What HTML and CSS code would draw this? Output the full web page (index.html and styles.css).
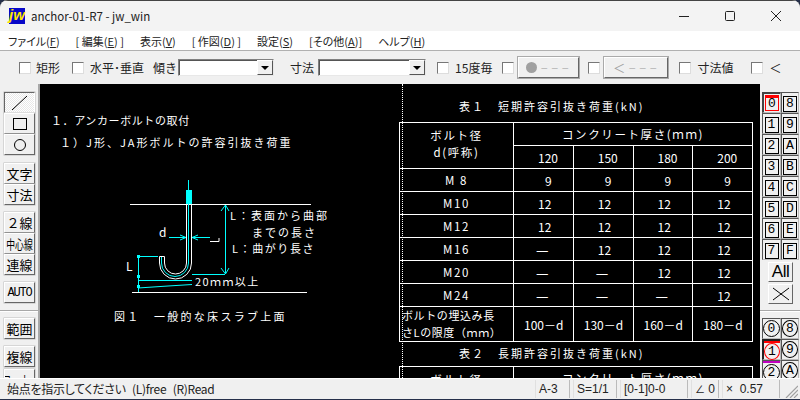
FILE: index.html
```html
<!DOCTYPE html>
<html lang="ja">
<head>
<meta charset="UTF-8" />
<title>anchor-01-R7 - jw_win</title>
<link rel="stylesheet" href="styles.css">
</head>
<body>

<div class="window">

  <div class="titlebar">
    <span class="logo">jw</span>
    <span class="title">anchor-01-R7 - jw_win</span>
    <div class="winbtns">
      <svg width="12" height="12" viewBox="0 0 12 12"><path d="M1 6.5H11" stroke="#222" fill="none"/></svg>
      <svg width="12" height="12" viewBox="0 0 12 12"><rect x="1.5" y="1.5" width="9" height="9" rx="1" stroke="#222" fill="none"/></svg>
      <svg width="12" height="12" viewBox="0 0 12 12"><path d="M1 1L11 11M11 1L1 11" stroke="#222" fill="none"/></svg>
    </div>
  </div>

  <div class="menubar">
    <span>ファイル(<u>F</u>)</span>
    <span>[ 編集(<u>E</u>) ]</span>
    <span>表示(<u>V</u>)</span>
    <span>[ 作図(<u>D</u>) ]</span>
    <span>設定(<u>S</u>)</span>
    <span>[その他(<u>A</u>)]</span>
    <span>ヘルプ(<u>H</u>)</span>
  </div>

  <div class="toolbar">
    <span class="chk m-first"></span><span class="lbl m-a">矩形</span>
    <span class="chk m-b"></span><span class="lbl">水平･垂直</span>
    <span class="lbl m-c">傾き</span>
    <span class="combo combo-a"><span class="arrow"></span></span>
    <span class="lbl m-d">寸法</span>
    <span class="combo combo-b"><span class="arrow"></span></span>
    <span class="chk m-e"></span><span class="lbl">15度毎</span>
    <span class="chk m-f"></span>
    <span class="tbtn tbtn-a"><i class="dot"></i><span class="dashes">－－－</span></span>
    <span class="chk m-g"></span>
    <span class="tbtn tbtn-b">＜<span class="dashes">－－－</span></span>
    <span class="chk m-h"></span><span class="lbl">寸法値</span>
    <span class="chk m-i"></span><span class="lbl">＜</span>
  </div>

  <div class="main">

    <div class="leftbar">
      <div class="tool on">
        <svg width="20" height="16" viewBox="0 0 20 16"><path d="M2 15L17 1" stroke="#000" fill="none"/></svg>
      </div>
      <div class="tool">
        <svg width="16" height="14" viewBox="0 0 16 14"><rect x="1.5" y="1.5" width="13" height="11" stroke="#000" fill="none"/></svg>
      </div>
      <div class="tool">
        <svg width="16" height="14" viewBox="0 0 16 14"><circle cx="8" cy="7" r="5.5" stroke="#000" fill="none"/></svg>
      </div>
      <div class="tool gap8">文字</div>
      <div class="tool">寸法</div>
      <div class="tool gap">２線</div>
      <div class="tool"><span class="squeeze">中心線</span></div>
      <div class="tool">連線</div>
      <div class="tool gap auto">AUTO</div>
      <div class="sep"></div>
      <div class="tool">範囲</div>
      <div class="tool gap">複線</div>
      <div class="tool gap1"><span class="squeeze">コーナー</span></div>
    </div>

    <div class="canvas">
      <div class="divider"></div>

      <div class="note n1">１．アンカーボルトの取付</div>
      <div class="note n2">１）J形、JA形ボルトの許容引抜き荷重</div>

      <svg class="drawing" width="320" height="130" viewBox="120 175 320 130">
        <g fill="none" stroke="#fff">
          <path d="M130 204.5H311M132 292.5H307"/>
          <path d="M186.5 204V263A11 11 0 0 1 164.5 263V256.5H159.5V263A16 16 0 0 0 191.5 263V204"/>
          <path d="M210 241.5H219V238"/>
        </g>
        <g fill="none" stroke="#0ff">
          <path d="M188.5 180V263A13.5 13.5 0 0 1 161.5 263V257"/>
          <path d="M225.5 205V274M192 274.5H225"/>
          <path d="M221 211L225.5 205L229 211M221 268L225.5 274L229 268"/>
          <path d="M169 237.5H186M192 237.5H210"/>
          <path d="M180 235L186 237.5L180 240M198 235L192 237.5L198 240"/>
          <path d="M138.5 256V292M138 256.5H158M138 280.5H192M138 288L168 286L192 284.5"/>
        </g>
        <rect x="186" y="190" width="6" height="14" fill="#0ff"/>
        <g fill="#0ff">
          <rect x="137" y="255" width="3" height="3"/>
          <rect x="137" y="275" width="3" height="3"/>
          <rect x="137" y="285" width="3" height="3"/>
        </g>
      </svg>

      <div class="note l1">L：表面から曲部</div>
      <div class="note l2">までの長さ</div>
      <div class="note l3">L：曲がり長さ</div>
      <div class="note l4">d</div>
      <div class="note l5">L</div>
      <div class="note l6">20ｍｍ以上</div>
      <div class="note fig">図１　一般的な床スラブ上面</div>

      <div class="sheet">
        <div class="caption">表１　短期許容引抜き荷重(kN)</div>
        <table class="bolts">
          <tr><th rowspan="2" class="head">ボルト径<br>d(呼称)</th><th colspan="4">コンクリート厚さ(ｍｍ)</th></tr>
          <tr><td>120</td><td>150</td><td>180</td><td>200</td></tr>
          <tr><th>M 8</th><td class="one">9</td><td class="one">9</td><td class="one">9</td><td class="one">9</td></tr>
          <tr><th>M10</th><td>12</td><td>12</td><td>12</td><td>12</td></tr>
          <tr><th>M12</th><td>12</td><td>12</td><td>12</td><td>12</td></tr>
          <tr><th>M16</th><td class="dash">—</td><td>12</td><td>12</td><td>12</td></tr>
          <tr><th>M20</th><td class="dash">—</td><td class="dash">—</td><td>12</td><td>12</td></tr>
          <tr><th>M24</th><td class="dash">—</td><td class="dash">—</td><td class="dash">—</td><td>12</td></tr>
          <tr class="tall"><th class="left">ボルトの埋込み長<br>さLの限度（ｍｍ）</th><td class="wide">100－d</td><td class="wide">130－d</td><td class="wide">160－d</td><td class="wide">180－d</td></tr>
        </table>
        <div class="caption second">表２　長期許容引抜き荷重(kN)</div>
        <table class="bolts">
          <tr><th rowspan="2" class="head">ボルト径<br>d(呼称)</th><th colspan="4">コンクリート厚さ(ｍｍ)</th></tr>
          <tr><td>120</td><td>150</td><td>180</td><td>200</td></tr>
        </table>
      </div>
    </div>

    <div class="rightbar">
      <div class="layers">
        <div class="lay cur"><b>0</b></div><div class="lay"><b>8</b></div>
        <div class="lay"><b>1</b></div><div class="lay"><b>9</b></div>
        <div class="lay"><b>2</b></div><div class="lay"><b>A</b></div>
        <div class="lay"><b>3</b></div><div class="lay"><b>B</b></div>
        <div class="lay"><b>4</b></div><div class="lay"><b>C</b></div>
        <div class="lay"><b>5</b></div><div class="lay"><b>D</b></div>
        <div class="lay"><b>6</b></div><div class="lay"><b>E</b></div>
        <div class="lay"><b>7</b></div><div class="lay"><b>F</b></div>
      </div>
      <div class="wide-btn">All</div>
      <div class="wide-btn">
        <svg width="18" height="14" viewBox="0 0 18 14"><path d="M1 1L17 13M17 1L1 13" stroke="#000" fill="none"/></svg>
      </div>
      <div class="sep"></div>
      <div class="groups">
        <div class="grp"><b>0</b></div><div class="grp"><b>8</b></div>
        <div class="grp cur"><b>1</b></div><div class="grp"><b>9</b></div>
        <div class="grp mag"><b>2</b></div><div class="grp"><b>A</b></div>
      </div>
    </div>
  </div>

  <div class="statusbar">
    <span class="msg">始点を指示してください (L)free (R)Read</span>
    <span class="cell c1">A-3</span>
    <span class="cell c2">S=1/1</span>
    <span class="cell c3">[0-1]0-0</span>
    <span class="cell c4">∠ 0</span>
    <span class="cell c5">×  0.57</span>
    <svg class="grip" width="14" height="14" viewBox="0 0 14 14"><path d="M2 14L14 2M6 14L14 6M10 14L14 10" stroke="#a0a0a0" stroke-width="1.2" fill="none"/></svg>
  </div>
</div>

</body>
</html>
```

FILE: styles.css
```css
html, body {
  margin: 0;
  padding: 0;
  background: #26304a;
}
body {
  width: 800px;
  height: 400px;
  overflow: hidden;
  font-family: "Noto Sans CJK JP", "Liberation Sans", sans-serif;
  font-size: 12px;
  color: #000;
}
.window {
  width: 800px;
  height: 399px;
  background: #f0f0f0;
  border-top-right-radius: 8px;
  border-top-left-radius: 8px;
  overflow: hidden;
  display: flex;
  flex-direction: column;
  box-shadow: inset 0 1px 0 #555;
}

/* title */
.titlebar {
  height: 31px;
  flex: none;
  display: flex;
  align-items: center;
  background: #f3f3f3;
  padding-left: 9px;
  border-top: 1px solid #444;
  box-sizing: border-box;
}
.logo {
  width: 16px;
  height: 16px;
  background: #0808c8;
  color: #ffe600;
  font: italic bold 15px/14px "Liberation Sans", sans-serif;
  text-align: center;
}
.title {
  margin-left: 6px;
  font-size: 11.5px;
  color: #222;
}
.winbtns {
  margin-left: auto;
  display: flex;
  gap: 34px;
  padding-right: 18px;
}

/* menu */
.menubar {
  height: 19px;
  flex: none;
  background: #fff;
  display: flex;
  align-items: center;
  gap: 16px;
  padding-left: 8px;
  font-size: 11px;
  font-feature-settings: "palt";
  color: #222;
}
.menubar span {
  white-space: nowrap;
}

/* toolbar */
.toolbar {
  height: 34px;
  flex: none;
  box-sizing: border-box;
  border-top: 1px solid #b0b0b0;
  display: flex;
  align-items: center;
  font-size: 12px;
  color: #222;
}
.chk {
  width: 10px;
  height: 10px;
  flex: none;
  background: #fff;
  border: 1px solid;
  border-color: #777 #ddd #ddd #777;
}
.lbl {
  margin-left: 6px;
  white-space: nowrap;
}
.m-first { margin-left: 19px; }
.lbl.m-a { margin-left: 5px; }
.m-b { margin-left: 12px; }
.lbl.m-c { margin-left: 9px; }
.lbl.m-d { margin-left: 16px; }
.m-e { margin-left: 11px; }
.m-f { margin-left: 10px; }
.m-g { margin-left: 9px; }
.m-h { margin-left: 11px; }
.m-i { margin-left: 18px; }
.combo {
  height: 15px;
  background: #fff;
  border: 1px solid;
  border-color: #808080 #e8e8e8 #e8e8e8 #808080;
  display: flex;
  justify-content: flex-end;
  box-shadow: inset 1px 1px 0 #555;
}
.combo-a { width: 94px; margin-left: 1px; }
.combo-b { width: 106px; margin-left: 4px; }
.arrow {
  width: 16px;
  background: #f0f0f0;
  border-left: 1px solid #fff;
  border-top: 1px solid #fff;
  border-right: 1px solid #555;
  border-bottom: 1px solid #555;
  box-sizing: border-box;
  position: relative;
}
.arrow::after {
  content: "";
  position: absolute;
  left: 3px;
  top: 5px;
  border: 4px solid transparent;
  border-top: 4px solid #000;
}
.tbtn {
  height: 19px;
  margin-left: 4px;
  display: flex;
  align-items: center;
  justify-content: center;
  background: #f0f0f0;
  border: 1px solid;
  border-color: #fff #666 #666 #fff;
  box-shadow: 0 0 0 1px #aaa;
  color: #a0a0a0;
  font-size: 12px;
  white-space: nowrap;
  overflow: hidden;
}
.tbtn-a { width: 59px; }
.tbtn-b { width: 62px; }
.dashes {
  font-size: 8px;
  letter-spacing: 2.5px;
  margin-left: 3px;
}
.dot {
  width: 11px;
  height: 11px;
  border-radius: 50%;
  background: #a0a0a0;
  flex: none;
}

/* main area */
.main {
  flex: 1;
  display: flex;
  min-height: 0;
}
.leftbar, .rightbar {
  width: 40px;
  flex: none;
  background: #f0f0f0;
  overflow: hidden;
  box-sizing: border-box;
}
.leftbar {
  padding: 8px 0 0 4px;
  border-right: 2px solid #a8a8a8;
}
.tool {
  width: 31px;
  height: 21px;
  box-sizing: border-box;
  display: flex;
  align-items: center;
  justify-content: center;
  background: #f0f0f0;
  border: 1px solid;
  border-color: #fff #666 #666 #fff;
  box-shadow: 0 0 0 0.5px #bbb;
  font-size: 13px;
  white-space: nowrap;
  overflow: hidden;
}
.tool.on {
  background: repeating-conic-gradient(#fff 0 25%, #e8e8e8 0 50%) 0 0 / 2px 2px;
  border-color: #666 #fff #fff #666;
}
.gap { margin-top: 7px; }
.gap8 { margin-top: 8px; }
.gap1 { margin-top: 2px; }
.auto {
  font: 12px "Liberation Mono", monospace;
  letter-spacing: -1.2px;
}
.squeeze {
  display: inline-block;
  transform: scaleX(0.68);
}
.leftbar .sep {
  margin: 7px 0 7px -4px;
  height: 1px;
  background: #a8a8a8;
  box-shadow: 0 1px 0 #fff;
}

/* drawing */
.canvas {
  flex: 1;
  background: #000;
  color: #fff;
  position: relative;
  overflow: hidden;
}
.divider {
  position: absolute;
  left: 362px;
  top: 0;
  bottom: 0;
  border-left: 1px dotted #fff;
}
.drawing {
  position: absolute;
  left: 80px;
  top: 91px;
}
.note {
  position: absolute;
  font-size: 11px;
  line-height: 14px;
  letter-spacing: 2px;
  white-space: nowrap;
}
.n1 { left: 11px; top: 29px; letter-spacing: 0.6px; }
.n2 { left: 20px; top: 51px; }
.l1 { left: 190px; top: 124px; }
.l2 { left: 212px; top: 141px; }
.l3 { left: 192px; top: 157px; letter-spacing: 1.6px; }
.l4 { left: 119px; top: 141px; font-size: 12px; }
.l5 { left: 86px; top: 175px; font-size: 12px; }
.l6 { left: 155px; top: 190px; letter-spacing: 1.4px; }
.fig { left: 74px; top: 225px; letter-spacing: 2.3px; }

/* tables on the sheet */
.sheet {
  position: absolute;
  left: 359px;
  top: 15px;
  width: 355px;
}
.caption {
  height: 23px;
  line-height: 14px;
  padding-left: 60px;
  font-size: 11px;
  letter-spacing: 2px;
  white-space: nowrap;
}
.caption.second {
  height: 20px;
  margin-top: 4px;
}
.bolts {
  border-collapse: collapse;
  table-layout: fixed;
  width: 354px;
  font-size: 12px;
}
.bolts th, .bolts td {
  height: 22px;
  padding: 0;
  border: 1px solid #fff;
  font-weight: normal;
  white-space: nowrap;
  overflow: hidden;
}
.bolts th {
  text-align: center;
  letter-spacing: 1.6px;
  font-size: 11.5px;
}
.bolts th:first-child { width: 113px; }
.bolts td {
  text-align: left;
  padding-left: 24px;
}
.bolts td.one { padding-left: 31px; }
.bolts td.dash { padding-left: 22px; font-size: 14px; }
.bolts td.wide { padding-left: 10px; }
.bolts .head {
  line-height: 17px;
  vertical-align: top;
  padding-top: 4px;
}
.bolts .tall th, .bolts .tall td { height: 34px; }
.bolts th.left {
  text-align: left;
  line-height: 17px;
  letter-spacing: 0.6px;
  font-size: 11px;
  padding-left: 2px;
}

/* right hand side */
.rightbar {
  padding: 8px 0 0 2px;
}
.layers, .groups {
  display: grid;
  grid-template-columns: 19px 18px;
  grid-auto-rows: 21px;
}
.lay, .grp {
  box-sizing: border-box;
  display: flex;
  align-items: center;
  justify-content: center;
  border: 1px solid;
  border-color: #555 #bbb #bbb #555;
  background: #f0f0f0;
  font: 13px "Liberation Mono", monospace;
}
.lay b {
  box-sizing: border-box;
  font-weight: normal;
  width: 14px;
  height: 16px;
  margin-top: 2px;
  line-height: 14px;
  text-align: center;
  border: 1px solid #000;
}
.lay.cur {
  border-width: 2px 1px 1px 2px;
  border-color: #444 #bbb #bbb #444;
}
.lay.cur b {
  border: 1px solid #f00;
  border-top-width: 3px;
  line-height: 12px;
  margin-top: 0;
}
.wide-btn {
  width: 25px;
  height: 20px;
  margin: 2px 0 0 6px;
  box-sizing: border-box;
  display: flex;
  align-items: center;
  justify-content: center;
  background: #f0f0f0;
  border: 1px solid;
  border-color: #fff #666 #666 #fff;
  font: 17px "Liberation Sans", sans-serif;
  letter-spacing: -0.5px;
}
.rightbar .sep {
  margin: 6px 0 7px -2px;
  height: 1px;
  background: #a8a8a8;
  box-shadow: 0 1px 0 #fff;
}
.grp b {
  box-sizing: border-box;
  font-weight: normal;
  width: 17px;
  height: 17px;
  line-height: 15px;
  text-align: center;
  border: 1px solid #000;
  border-radius: 50%;
}
.grp.cur {
  border-width: 2px 1px 1px 2px;
  border-color: #222 #bbb #bbb #222;
  box-shadow: inset 0 2px 0 #f00;
}
.grp.cur b {
  border-color: #f00;
  margin-top: 3px;
}
.grp.mag {
  box-shadow: inset 0 2px 0 #c000c0;
}
.grp.mag b {
  margin-top: 4px;
}

/* status */
.statusbar {
  height: 21px;
  flex: none;
  background: #f0f0f0;
  display: flex;
  align-items: center;
  position: relative;
  box-shadow: inset 0 1px 0 #fff;
  font-size: 12px;
  color: #222;
}
.msg {
  position: absolute;
  left: 7px;
  white-space: nowrap;
  font-feature-settings: "palt";
  word-spacing: 4px;
  letter-spacing: -0.3px;
}
.cell {
  height: 18px;
  box-sizing: border-box;
  padding-left: 3px;
  border-right: 1px solid #bbb;
  border-left: 1px solid #e0e0e0;
  margin-right: 3px;
  white-space: pre;
  font: 12px/18px "Liberation Sans", sans-serif;
}
.c1 { margin-left: 535px; width: 35px; }
.c2 { width: 44px; }
.c3 { width: 68px; }
.c4 { width: 28px; }
.c5 { width: 58px; }
.grip {
  position: absolute;
  right: 2px;
  bottom: 1px;
}
```
